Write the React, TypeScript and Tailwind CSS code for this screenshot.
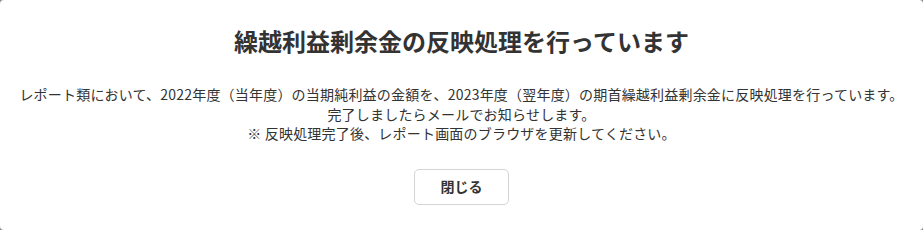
import React from "react";

export default function App() {
  return (
    <div className="w-[923px] h-[230px] bg-[#8c8c8c]" style={{ fontFamily: '"Noto Sans CJK JP", "Noto Sans", sans-serif' }}>
      <div className="w-full h-full bg-white rounded-[4px] flex flex-col items-center pt-[23px]">
        <h1 className="text-[24px] leading-[36px] font-bold text-[#333333]">繰越利益剰余金の反映処理を行っています</h1>
        <div className="mt-[26px] text-[14px] leading-[19.5px] tracking-[0.2px] text-[#333333] text-center">
          <p>レポート類において、2022年度（当年度）の当期純利益の金額を、2023年度（翌年度）の期首繰越利益剰余金に反映処理を行っています。</p>
          <p>完了しましたらメールでお知らせします。</p>
          <p>※ 反映処理完了後、レポート画面のブラウザを更新してください。</p>
        </div>
        <button className="mt-[25px] w-[95px] h-[36px] rounded-[5px] border border-[#d4d4d4] bg-white text-[14px] font-bold text-[#333333]">
          閉じる
        </button>
      </div>
    </div>
  );
}
